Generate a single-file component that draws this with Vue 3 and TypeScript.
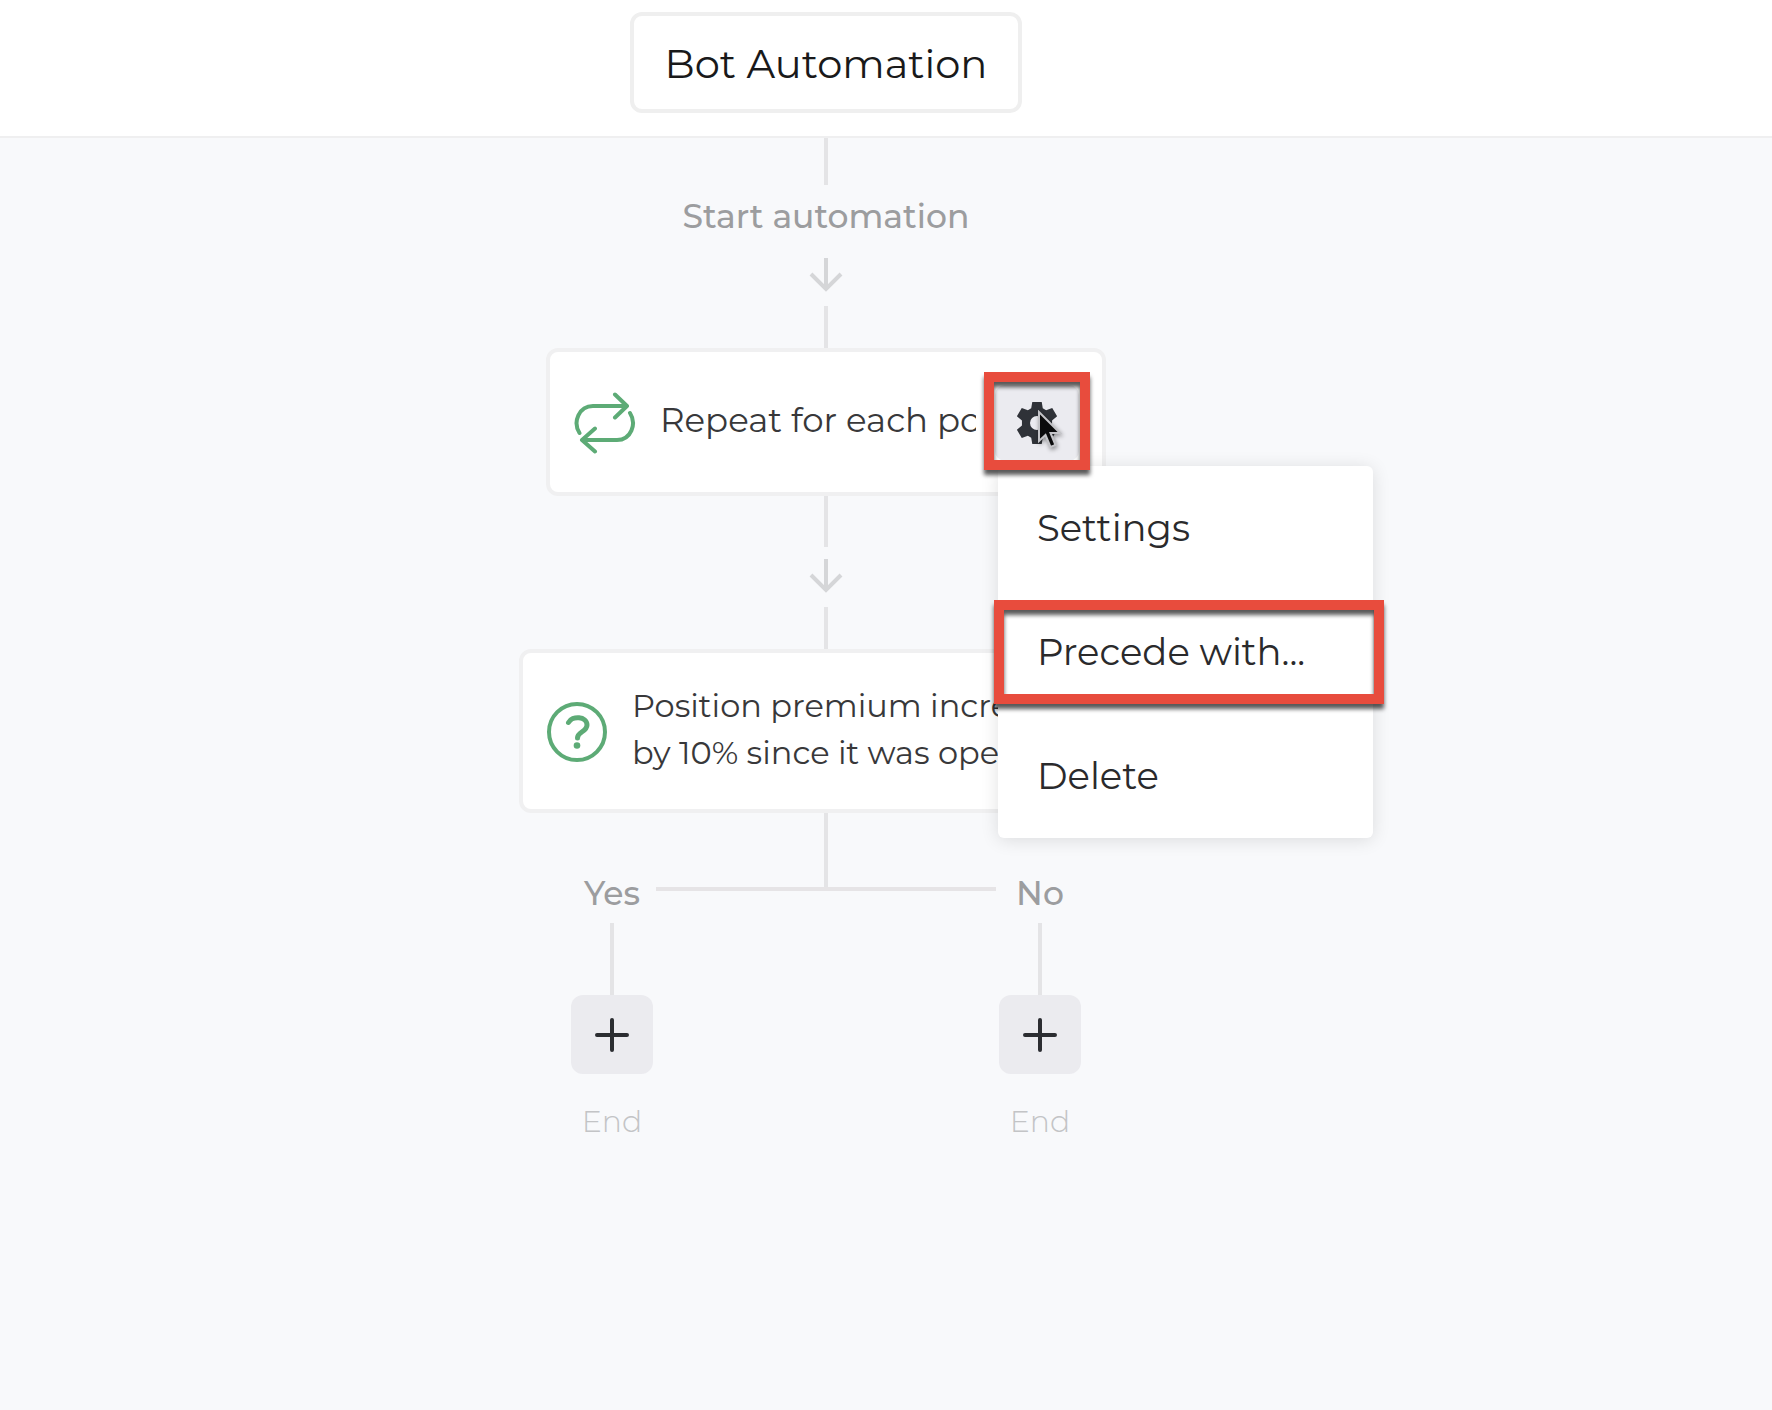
<script setup lang="ts">
import { ref } from 'vue'

interface MenuItem {
  label: string
  highlighted: boolean
}

const title = 'Bot Automation'
const menuOpen = ref(true)

const menuItems: MenuItem[] = [
  { label: 'Settings', highlighted: false },
  { label: 'Precede with...', highlighted: true },
  { label: 'Delete', highlighted: false },
]

const branches: string[] = ['Yes', 'No']
</script>

<template>
  <div class="page">
    <header class="header">
      <h1 class="title">{{ title }}</h1>
    </header>

    <main class="flow">
      <div class="line line-start"></div>
      <p class="label start-label">Start automation</p>
      <svg class="arrow" viewBox="0 0 34 34" aria-hidden="true">
        <path d="M17 0V31M2 16L17 31L32 16" />
      </svg>
      <div class="line line-in"></div>

      <section class="card card-repeat">
        <svg class="icon" viewBox="0 0 62 62" aria-hidden="true">
          <path d="M5.500 41C-1.500 30 5 14 19 14H53M41 2.500L53 14L41 25.500" />
          <path d="M56 21C63 32 57 48 43 48H8M21 36.500L8 48L21 59.500" />
        </svg>
        <span class="card-text clipped">Repeat for each position</span>
        <div class="gear-wrap">
          <button class="gear highlight" type="button" aria-label="Node options" @click="menuOpen = !menuOpen">
            <svg class="gear-icon" viewBox="0 0 24 24" aria-hidden="true">
              <path
                fill-rule="evenodd"
                d="M9.300 0H14.700L15.300 3.600L17.200 4.700L20.700 3.400L23.500 8.200L20.600 10.600V13.400L23.500 15.800L20.700 20.600L17.200 19.300L15.300 20.400L14.700 24H9.300L8.700 20.400L6.800 19.300L3.300 20.600L0.500 15.800L3.400 13.400V10.600L0.500 8.200L3.300 3.400L6.800 4.700L8.700 3.600ZM12 8A4 4 0 1 0 12 16A4 4 0 1 0 12 8Z"
              />
            </svg>
          </button>
          <ul v-if="menuOpen" class="menu">
            <li v-for="item in menuItems" :key="item.label">
              <button class="menu-item" :class="{ highlight: item.highlighted }" type="button">
                {{ item.label }}
              </button>
            </li>
          </ul>
          <svg class="cursor" viewBox="0 0 26 40" aria-hidden="true">
            <path d="M2 2V31L8.500 25L13.500 37L18.500 35L13.500 23H23Z" />
          </svg>
        </div>
      </section>

      <div class="line line-out"></div>
      <svg class="arrow" viewBox="0 0 34 34" aria-hidden="true">
        <path d="M17 0V31M2 16L17 31L32 16" />
      </svg>
      <div class="line line-in"></div>

      <section class="card card-decision">
        <svg class="icon" viewBox="0 0 62 62" aria-hidden="true">
          <circle cx="31" cy="31" r="28" />
          <path class="mark" d="M22.500 21.500C26 14.500 41 15 41 24C41 31 31.500 30.500 31.500 37" />
          <circle class="dot" cx="31" cy="44.500" r="3.300" />
        </svg>
        <span class="card-text two-lines">Position premium increases<br />by 10% since it was opened</span>
      </section>

      <div class="line line-split"></div>
      <div class="split">
        <span class="label branch-label">{{ branches[0] }}</span>
        <div class="fork">
          <div class="line line-fork"></div>
          <div class="bar"></div>
        </div>
        <span class="label branch-label">{{ branches[1] }}</span>
      </div>

      <div class="branches">
        <div v-for="branch in branches" :key="branch" class="branch">
          <div class="line line-branch"></div>
          <button class="add" type="button" :aria-label="'Add step to ' + branch">
            <svg class="plus" viewBox="0 0 34 34" aria-hidden="true">
              <path d="M17 2V32M2 17H32" />
            </svg>
          </button>
          <span class="end">End</span>
        </div>
      </div>
    </main>
  </div>
</template>

<style>
body {
  margin: 0;
  background: #f8f9fb;
}
</style>

<style scoped>
.page {
  min-height: 100vh;
  box-sizing: border-box;
  background: #f8f9fb;
  font-family: Montserrat, Inter, sans-serif;
  color: #38383a;
}

.page * {
  box-sizing: border-box;
}

button {
  border: 0;
  padding: 0;
  font: inherit;
  color: inherit;
  cursor: pointer;
}

.header {
  display: flex;
  justify-content: center;
  padding: 12px 120px 23px 0;
  background: #fff;
  border-bottom: 2px solid #efeff0;
}

.title {
  margin: 0;
  padding: 2px 31px 0;
  border: 4px solid #efefef;
  border-radius: 12px;
  font-size: 40px;
  font-weight: 400;
  line-height: 91px;
  color: #19191a;
  white-space: nowrap;
}

.flow {
  display: flex;
  flex-direction: column;
  align-items: center;
  padding-right: 120px;
}

.line {
  width: 4px;
  background: #e4e4e6;
}

.line-start {
  height: 47px;
}

.line-in {
  height: 42px;
  margin-top: 14px;
}

.line-out {
  height: 51px;
  margin-bottom: 12px;
}

.line-split {
  height: 60px;
}

.line-fork {
  height: 14px;
}

.line-branch {
  height: 72px;
}

.label {
  margin: 0;
  font-size: 33px;
  font-weight: 500;
  line-height: 40px;
  color: #9c9d9f;
  white-space: nowrap;
}

.start-label {
  margin: 11px 0 22px;
}

.arrow {
  width: 34px;
  height: 34px;
  fill: none;
  stroke: #d5d6d8;
  stroke-width: 4;
}

.card {
  display: flex;
  align-items: center;
  border: 4px solid #f0f0f1;
  border-radius: 12px;
  background: #fff;
}

.card-repeat {
  width: 560px;
  height: 148px;
  padding: 2px 23px 0 24px;
}

.card-decision {
  width: 614px;
  height: 164px;
  padding: 2px 23px 0;
}

.icon {
  flex: none;
  width: 62px;
  height: 62px;
  margin-right: 24px;
  fill: none;
  stroke: #5dab76;
  stroke-width: 4;
  stroke-linecap: round;
  stroke-linejoin: round;
}

.icon .mark {
  stroke-width: 5;
}

.icon .dot {
  fill: #5dab76;
  stroke: none;
}

.card-text {
  padding-bottom: 6px;
  font-size: 34px;
  line-height: 48px;
  white-space: nowrap;
}

.clipped {
  flex: 1;
  min-width: 0;
  margin-right: 19px;
  overflow: hidden;
}

.two-lines {
  font-size: 32px;
  line-height: 47px;
}

.gear-wrap {
  position: relative;
  flex: none;
}

.gear {
  position: relative;
  z-index: 3;
  display: flex;
  align-items: center;
  justify-content: center;
  width: 84px;
  height: 76px;
  border-radius: 10px;
  background: #ebebf0;
}

.gear-icon {
  width: 42px;
  height: 42px;
  fill: #2f3238;
}

.highlight::after {
  content: '';
  position: absolute;
  border: 10px solid #e84c3d;
  filter: drop-shadow(0 5px 2px rgba(0, 0, 0, 0.65));
  pointer-events: none;
}

.gear.highlight::after {
  inset: -13px -11px -9px;
}

.menu {
  position: absolute;
  z-index: 2;
  top: 81px;
  left: 3px;
  width: 375px;
  margin: 0;
  padding: 0;
  list-style: none;
  border-radius: 6px;
  background: #fff;
  box-shadow: 0 2px 18px rgba(0, 0, 0, 0.12);
}

.menu-item {
  position: relative;
  display: block;
  width: 100%;
  height: 124px;
  padding: 0 39px 2px;
  background: none;
  font-size: 37px;
  text-align: left;
  color: #2a2a2c;
}

.menu-item.highlight::after {
  inset: 10px -11px 10px -4px;
}

.cursor {
  position: absolute;
  z-index: 4;
  top: 25px;
  left: 42px;
  width: 26px;
  height: 40px;
  fill: #0b0b0c;
  stroke: #c4c4c8;
  stroke-width: 2;
  filter: drop-shadow(1px 2px 2px rgba(0, 0, 0, 0.4));
  pointer-events: none;
}

.split,
.branches {
  display: flex;
  justify-content: space-between;
  width: 516px;
}

.branch-label {
  width: 88px;
  text-align: center;
}

.fork {
  display: flex;
  flex: 1;
  flex-direction: column;
  align-items: center;
}

.bar {
  width: 100%;
  height: 4px;
  background: #e6e4e6;
}

.branches {
  margin-top: 10px;
}

.branch {
  display: flex;
  flex-direction: column;
  align-items: center;
  width: 88px;
}

.add {
  display: flex;
  align-items: center;
  justify-content: center;
  width: 82px;
  height: 79px;
  border-radius: 12px;
  background: #ebebef;
}

.plus {
  width: 34px;
  height: 34px;
  fill: none;
  stroke: #2b2d31;
  stroke-width: 4;
  stroke-linecap: round;
}

.end {
  margin-top: 28px;
  font-size: 30px;
  font-weight: 300;
  line-height: 40px;
  color: #c3c4c6;
}
</style>
